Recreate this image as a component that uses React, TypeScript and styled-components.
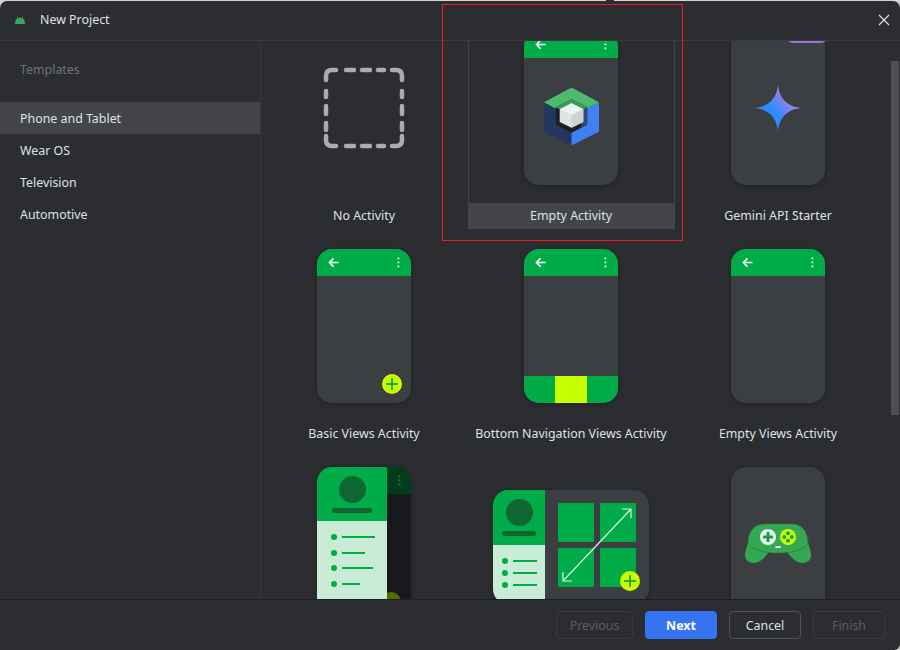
import styled, { createGlobalStyle } from 'styled-components';

const GlobalStyle = createGlobalStyle`
  html, body {
    margin: 0;
    padding: 0;
    background: #d4d4d4;
  }
  body {
    font-family: "Noto Sans", "Open Sans", sans-serif;
    font-size: 12.4px;
  }
`;

const Dialog = styled.div`
  position: relative;
  width: 900px;
  height: 650px;
  box-sizing: border-box;
  padding-top: 1px;
  overflow: hidden;
`;

const Window = styled.div`
  display: flex;
  flex-direction: column;
  height: 649px;
  background: #2b2d30;
  border-radius: 7px 7px 6px 0;
  overflow: hidden;
`;

const TitleBar = styled.div`
  display: flex;
  align-items: center;
  flex: 0 0 40px;
  padding: 0 10px 2px 15px;
  box-sizing: border-box;
  border-bottom: 1px solid #393b40;
`;

const TitleText = styled.span`
  margin-left: 15px;
  color: #dfe1e5;
  flex: 1;
`;

const Main = styled.div`
  display: flex;
  flex: 1;
  min-height: 0;
`;

const Sidebar = styled.div`
  flex: 0 0 260px;
  border-right: 1px solid #393b40;
`;

const SidebarHeading = styled.div`
  padding: 20px 20px 0;
  height: 41px;
  line-height: 18px;
  color: #6f737a;
`;

const SidebarItem = styled.div<{ $active?: boolean }>`
  height: 32px;
  line-height: 34px;
  padding-left: 20px;
  color: #dfe1e5;
  background: ${(p) => (p.$active ? '#43454a' : 'transparent')};
`;

const Content = styled.div`
  position: relative;
  flex: 1;
  overflow: hidden;
`;

// the list is scrolled a little, so the first row starts above the edge
const TemplateGrid = styled.div`
  display: grid;
  grid-template-columns: repeat(3, 207px);
  grid-auto-rows: 218px;
  margin-top: -30px;
`;

const Cell = styled.div<{ $selected?: boolean }>`
  display: flex;
  flex-direction: column;
  align-items: center;
  box-sizing: border-box;
  border: 1px solid ${(p) => (p.$selected ? '#43454a' : 'transparent')};
  border-bottom: none;
`;

const Preview = styled.div<{ $center?: boolean }>`
  flex: 1;
  display: flex;
  align-items: ${(p) => (p.$center ? 'center' : 'flex-start')};
  justify-content: center;
  padding-top: ${(p) => (p.$center ? 1 : 19)}px;
  padding-right: 1px;
  min-height: 0;
`;

const CellLabel = styled.div<{ $selected?: boolean }>`
  align-self: stretch;
  margin: 0 -1px;
  padding-right: 1px;
  flex: 0 0 26px;
  line-height: 25px;
  text-align: center;
  color: #dfe1e5;
  background: ${(p) => (p.$selected ? '#43454a' : 'transparent')};
`;

const Phone = styled.div<{ $open?: boolean }>`
  position: relative;
  display: flex;
  flex-direction: column;
  flex: none;
  width: 94px;
  height: 154px;
  border-radius: 15px;
  background: #3c3f42;
  box-shadow: 0 1px 5px rgba(0, 0, 0, 0.3);
  overflow: ${(p) => (p.$open ? 'visible' : 'hidden')};
`;

const AppBar = styled.div`
  display: flex;
  align-items: center;
  justify-content: space-between;
  flex: 0 0 27px;
  padding: 0 11px 0 11px;
  background: #00ac47;
`;

const PhoneBody = styled.div<{ $lift?: number }>`
  flex: 1;
  display: flex;
  align-items: center;
  justify-content: center;
  padding-bottom: ${(p) => p.$lift ?? 0}px;
`;

const BottomNav = styled.div`
  display: flex;
  justify-content: center;
  flex: 0 0 27px;
  background: #00ac47;
`;

const NavActive = styled.div`
  width: 32px;
  background: #c6ff00;
`;

const Fab = styled.div<{ $right: number; $bottom: number; $dim?: boolean }>`
  position: absolute;
  right: ${(p) => p.$right}px;
  bottom: ${(p) => p.$bottom}px;
  display: flex;
  align-items: center;
  justify-content: center;
  width: 20px;
  height: 20px;
  border-radius: 50%;
  background: ${(p) => (p.$dim ? '#566b00' : '#c6ff00')};
`;

const GeminiTab = styled.div`
  position: absolute;
  top: -6px;
  right: -2px;
  width: 40px;
  height: 18px;
  border-radius: 0 0 6px 6px;
  background: #a56cdb;
`;

const DrawerPane = styled.div`
  position: relative;
  z-index: 1;
  display: flex;
  flex-direction: column;
  flex: 0 0 70px;
`;

const DrawerHeader = styled.div<{ $height: number }>`
  display: flex;
  flex-direction: column;
  align-items: center;
  flex: 0 0 ${(p) => p.$height}px;
  box-sizing: border-box;
  padding-top: 9px;
  background: #00ac47;
`;

const Avatar = styled.div`
  flex: none;
  width: 27px;
  height: 27px;
  border-radius: 50%;
  background: #0f6630;
`;

const NameBar = styled.div<{ $width: number; $top: number }>`
  flex: none;
  width: ${(p) => p.$width}px;
  height: 5px;
  margin-top: ${(p) => p.$top}px;
  border-radius: 3px;
  background: #0f6630;
`;

const DrawerList = styled.div<{ $gap: number; $left: number }>`
  flex: 1;
  display: flex;
  flex-direction: column;
  gap: ${(p) => p.$gap}px;
  padding: 13px 0 0 ${(p) => p.$left}px;
  background: #c8ecd6;
`;

const DrawerRow = styled.div`
  display: flex;
  align-items: center;
  height: 6px;
  gap: 5px;
`;

const Dot = styled.span`
  width: 6px;
  height: 6px;
  border-radius: 50%;
  background: #00ac47;
`;

const DrawerLine = styled.span<{ $width: number }>`
  width: ${(p) => p.$width}px;
  height: 2px;
  background: #00ac47;
`;

const Scrim = styled.div`
  flex: 1;
  background: #17191c;
`;

const ScrimBar = styled.div`
  display: flex;
  justify-content: center;
  align-items: center;
  height: 27px;
  background: #003d1a;
`;

const PhoneRow = styled.div`
  display: flex;
  flex: 1;
  min-height: 0;
`;

const Tablet = styled.div`
  position: relative;
  display: flex;
  flex: none;
  width: 156px;
  height: 114px;
  margin-top: 23px;
  border-radius: 15px;
  background: #3c3f42;
  box-shadow: 0 1px 5px rgba(0, 0, 0, 0.3);
  overflow: hidden;
`;

const TabletPane = styled.div`
  display: flex;
  flex-direction: column;
  flex: 0 0 52px;
`;

const TabletGrid = styled.div`
  position: relative;
  display: grid;
  grid-template-columns: 36px 36px;
  grid-template-rows: 39px 39px;
  gap: 6px;
  padding: 13px 0 0 13px;
`;

const TabletTile = styled.div`
  border-radius: 1px;
  background: #00ac47;
`;

const TabletArrow = styled.svg`
  position: absolute;
  left: 13px;
  top: 13px;
`;

const Footer = styled.div`
  display: flex;
  justify-content: flex-end;
  align-items: center;
  gap: 12px;
  flex: 0 0 51px;
  box-sizing: border-box;
  padding: 0 15px 1px 0;
  border-top: 1px solid #1e1f22;
`;

const Button = styled.button<{ $kind: 'primary' | 'normal' | 'disabled'; $width: number }>`
  width: ${(p) => p.$width}px;
  height: 28px;
  padding: 2px 0 0;
  border-radius: 4px;
  font-family: inherit;
  font-size: 12.4px;
  font-weight: ${(p) => (p.$kind === 'primary' ? 700 : 400)};
  color: ${(p) => (p.$kind === 'disabled' ? '#5a5d63' : p.$kind === 'primary' ? '#ffffff' : '#dfe1e5')};
  background: ${(p) => (p.$kind === 'primary' ? '#3574f0' : 'transparent')};
  border: 1px solid
    ${(p) => (p.$kind === 'primary' ? '#3574f0' : p.$kind === 'normal' ? '#4e5157' : '#393b40')};
`;

const ScrollThumb = styled.div`
  position: absolute;
  top: 20px;
  right: 1px;
  width: 8px;
  height: 354px;
  background: #4e5055;
`;

const Highlight = styled.div`
  position: absolute;
  left: 442px;
  top: 4px;
  width: 241px;
  height: 237px;
  box-sizing: border-box;
  border: 1px solid #ed1c24;
  pointer-events: none;
`;

const TopNotch = styled.div`
  position: absolute;
  left: 606px;
  top: 0;
  width: 8px;
  height: 2px;
  background: #2b2d40;
`;

function BackArrow() {
  return (
    <svg width="11" height="11" viewBox="0 0 12 12" fill="none" stroke="#ffffff" strokeWidth="1.7">
      <path d="M11.5 6H1.5M6 1.5L1.5 6L6 10.5" />
    </svg>
  );
}

function MoreDots({ color = '#d9f2e2' }: { color?: string }) {
  return (
    <svg width="3" height="11" viewBox="0 0 3 11" fill={color}>
      <rect x="0.5" y="0.5" width="1.8" height="1.8" />
      <rect x="0.5" y="4.5" width="1.8" height="1.8" />
      <rect x="0.5" y="8.5" width="1.8" height="1.8" />
    </svg>
  );
}

function PlusIcon() {
  return (
    <svg width="12" height="12" viewBox="0 0 12 12" stroke="#00963e" strokeWidth="1.5">
      <path d="M6 0V12M0 6H12" />
    </svg>
  );
}

function AndroidIcon() {
  return (
    <svg width="10" height="8" viewBox="0 0 10 8" fill="#3ba55d">
      <path d="M0 8C0 5 1 3.2 2.6 2.3L1.9 0.4L2.5 0.2L3.3 2C4.3 1.6 5.7 1.6 6.7 2L7.5 0.2L8.1 0.4L7.4 2.3C9 3.2 10 5 10 8Z" />
    </svg>
  );
}

function CloseIcon() {
  return (
    <svg width="12" height="12" viewBox="0 0 12 12" stroke="#dfe1e5" strokeWidth="1.1">
      <path d="M1 1L11 11M11 1L1 11" />
    </svg>
  );
}

function DashedSquare() {
  return (
    <svg width="82" height="82" viewBox="0 0 82 82" fill="none" stroke="#a8abb0" strokeWidth="4.5" strokeLinecap="round">
      <path d="M3 13V9Q3 3 9 3H13" />
      <path d="M69 3H73Q79 3 79 9V13" />
      <path d="M3 69V73Q3 79 9 79H13" />
      <path d="M69 79H73Q79 79 79 73V69" />
      <path d="M23 3H31M39 3H47M55 3H61" />
      <path d="M23 79H31M39 79H47M55 79H61" />
      <path d="M3 24V30M3 39V47M3 56V63" />
      <path d="M79 24V30M79 39V47M79 56V63" />
    </svg>
  );
}

function ComposeLogo() {
  return (
    <svg width="57" height="60" viewBox="0 0 58 60">
      <path d="M1 14L29 0L57 14V45L29 59L1 45Z" fill="#26375f" />
      <path d="M29 59V30L57 15V45Z" fill="#3f80f4" />
      <path d="M1 15L27 1Q29 0 31 1L57 15L29 30Z" fill="#4cbb6c" />
      <path d="M13 20L29 12L45 20V38L29 46L13 38Z" fill="#1d1f23" />
      <path d="M29 12L45 20V38L39 41V24L29 19Z" fill="#2f4f85" opacity="0.9" />
      <path d="M13 20L29 12L45 20L29 28Z" fill="#3c9a5a" />
      <path d="M17 22L29 16L41 22V35L29 41L17 35Z" fill="#dfe3de" />
      <path d="M17 22L29 16L41 22L29 28Z" fill="#eef2ec" />
      <path d="M29 28L41 22V35L29 41Z" fill="#cfd3ce" />
    </svg>
  );
}

function GeminiStar() {
  return (
    <svg width="48" height="48" viewBox="0 0 48 48">
      <defs>
        <linearGradient id="gemini-fill" x1="0.2" y1="0.8" x2="0.85" y2="0.2">
          <stop offset="0.35" stopColor="#2d8cff" />
          <stop offset="0.85" stopColor="#a67ee8" />
        </linearGradient>
      </defs>
      <path d="M24 0C24.6 14 34 23.4 48 24C34 24.6 24.6 34 24 48C23.4 34 14 24.6 0 24C14 23.4 23.4 14 24 0Z" fill="url(#gemini-fill)" />
    </svg>
  );
}

function GamepadIcon() {
  return (
    <svg width="66" height="42" viewBox="0 0 66 42">
      <path d="M4 16L0 30Q-1 39 8 40Q14 40 19 35L24 29H42L47 35Q52 40 58 40Q67 39 66 30L62 16Z" fill="#34a853" />
      <path d="M3 20C3 8 10 1 19 1H47C56 1 63 8 63 20C60 26 50 30 33 30C16 30 6 26 3 20Z" fill="#34a853" stroke="#24773b" strokeWidth="0.6" />
      <circle cx="23" cy="14" r="8" fill="#e8f5ea" />
      <path d="M23 9V19M18 14H28" stroke="#1f9a49" strokeWidth="3" />
      <circle cx="43" cy="14" r="8" fill="#c6ff00" />
      <g fill="#1f9a49">
        <circle cx="43" cy="10.2" r="2" />
        <circle cx="43" cy="17.8" r="2" />
        <circle cx="39.2" cy="14" r="2" />
        <circle cx="46.8" cy="14" r="2" />
      </g>
      <rect x="30.5" y="23" width="5" height="2" fill="#ffffff" />
    </svg>
  );
}

function StandardPhone({ children, nav, lift }: { children?: React.ReactNode; nav?: boolean; lift?: number }) {
  return (
    <Phone>
      <AppBar>
        <BackArrow />
        <MoreDots />
      </AppBar>
      <PhoneBody $lift={lift}>{children}</PhoneBody>
      {nav && (
        <BottomNav>
          <NavActive />
        </BottomNav>
      )}
    </Phone>
  );
}

const drawerLines = [33, 23, 31, 18];
const tabletLines = [24, 24, 24];

function DrawerPhone() {
  return (
    <Phone>
      <PhoneRow>
        <DrawerPane>
          <DrawerHeader $height={54}>
            <Avatar />
            <NameBar $width={40} $top={5} />
          </DrawerHeader>
          <DrawerList $gap={9.7} $left={14}>
            {drawerLines.map((w, i) => (
              <DrawerRow key={i}>
                <Dot />
                <DrawerLine $width={w} />
              </DrawerRow>
            ))}
          </DrawerList>
        </DrawerPane>
        <Scrim>
          <ScrimBar>
            <MoreDots color="#3e6b50" />
          </ScrimBar>
        </Scrim>
      </PhoneRow>
      <Fab $dim $right={10} $bottom={9} />
    </Phone>
  );
}

function TabletPreview() {
  return (
    <Tablet>
      <TabletPane>
        <DrawerHeader $height={55}>
          <Avatar />
          <NameBar $width={34} $top={5} />
        </DrawerHeader>
        <DrawerList $gap={6} $left={9}>
          {tabletLines.map((w, i) => (
            <DrawerRow key={i}>
              <Dot />
              <DrawerLine $width={w} />
            </DrawerRow>
          ))}
        </DrawerList>
      </TabletPane>
      <TabletGrid>
        <TabletTile />
        <TabletTile />
        <TabletTile />
        <TabletTile />
        <TabletArrow width="78" height="84" viewBox="0 0 78 84" fill="none" stroke="#dcefe3" strokeWidth="1.2">
          <path d="M5 78L73 6M64 6H73V15M5 69V78H14" />
        </TabletArrow>
      </TabletGrid>
      <Fab $right={9} $bottom={13}>
        <PlusIcon />
      </Fab>
    </Tablet>
  );
}

export default function App() {
  return (
    <Dialog>
      <GlobalStyle />
      <Window>
        <TitleBar>
          <AndroidIcon />
          <TitleText>New Project</TitleText>
          <CloseIcon />
        </TitleBar>
        <Main>
          <Sidebar>
            <SidebarHeading>Templates</SidebarHeading>
            <SidebarItem $active>Phone and Tablet</SidebarItem>
            <SidebarItem>Wear OS</SidebarItem>
            <SidebarItem>Television</SidebarItem>
            <SidebarItem>Automotive</SidebarItem>
          </Sidebar>
          <Content>
            <TemplateGrid>
              <Cell>
                <Preview $center>
                  <DashedSquare />
                </Preview>
                <CellLabel>No Activity</CellLabel>
              </Cell>
              <Cell $selected>
                <Preview>
                  <StandardPhone lift={10}>
                    <ComposeLogo />
                  </StandardPhone>
                </Preview>
                <CellLabel $selected>Empty Activity</CellLabel>
              </Cell>
              <Cell>
                <Preview>
                  <Phone $open>
                    <GeminiTab />
                    <PhoneBody>
                      <GeminiStar />
                    </PhoneBody>
                  </Phone>
                </Preview>
                <CellLabel>Gemini API Starter</CellLabel>
              </Cell>
              <Cell>
                <Preview>
                  <Phone>
                    <AppBar>
                      <BackArrow />
                      <MoreDots />
                    </AppBar>
                    <PhoneBody />
                    <Fab $right={9} $bottom={9}>
                      <PlusIcon />
                    </Fab>
                  </Phone>
                </Preview>
                <CellLabel>Basic Views Activity</CellLabel>
              </Cell>
              <Cell>
                <Preview>
                  <StandardPhone nav />
                </Preview>
                <CellLabel>Bottom Navigation Views Activity</CellLabel>
              </Cell>
              <Cell>
                <Preview>
                  <StandardPhone />
                </Preview>
                <CellLabel>Empty Views Activity</CellLabel>
              </Cell>
              <Cell>
                <Preview>
                  <DrawerPhone />
                </Preview>
              </Cell>
              <Cell>
                <Preview>
                  <TabletPreview />
                </Preview>
              </Cell>
              <Cell>
                <Preview>
                  <Phone>
                    <PhoneBody>
                      <GamepadIcon />
                    </PhoneBody>
                  </Phone>
                </Preview>
              </Cell>
            </TemplateGrid>
            <ScrollThumb />
          </Content>
        </Main>
        <Footer>
          <Button $kind="disabled" $width={77}>Previous</Button>
          <Button $kind="primary" $width={72}>Next</Button>
          <Button $kind="normal" $width={72}>Cancel</Button>
          <Button $kind="disabled" $width={72}>Finish</Button>
        </Footer>
      </Window>
      <TopNotch />
      <Highlight />
    </Dialog>
  );
}
